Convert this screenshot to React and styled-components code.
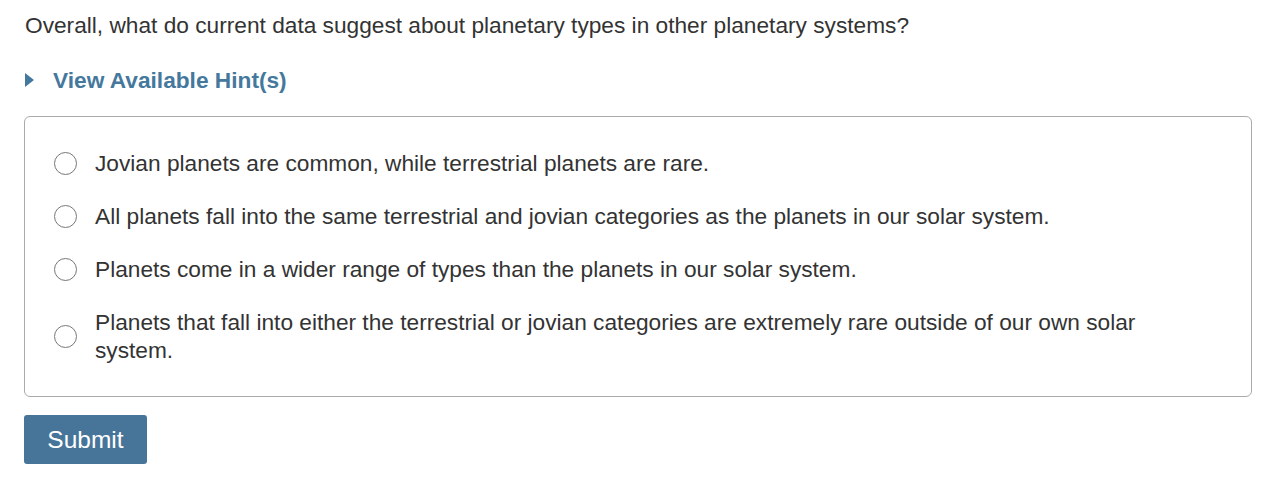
import React from 'react';
import styled, { createGlobalStyle } from 'styled-components';

const Global = createGlobalStyle`
  body {
    margin: 0;
    background: #ffffff;
    font-family: 'Liberation Sans', Arial, Helvetica, sans-serif;
    color: #333333;
  }
`;

const Page = styled.div`
  padding: 11px 24px 24px 24px;
  width: 1228px;
`;

const Question = styled.p`
  margin: 0;
  font-size: 22.7px;
  line-height: 28px;
  padding-left: 1px;
`;

const Hint = styled.div`
  display: flex;
  align-items: center;
  gap: 19px;
  margin-top: 27px;
  padding-left: 1px;
  color: #45789d;
  font-size: 22.7px;
  font-weight: bold;
  line-height: 28px;
`;

const Triangle = styled.span`
  width: 0;
  height: 0;
  border-top: 7.5px solid transparent;
  border-bottom: 7.5px solid transparent;
  border-left: 9px solid #45789d;
`;

const Choices = styled.div`
  margin-top: 22px;
  border: 1px solid #aaaaaa;
  border-radius: 6px;
  padding: 32px 60px 32px 29px;
  display: flex;
  flex-direction: column;
  gap: 25px;
`;

const Choice = styled.label`
  display: flex;
  align-items: center;
  gap: 18px;
  font-size: 22.7px;
  line-height: 28px;
`;

const Radio = styled.span`
  flex: none;
  width: 23px;
  height: 23px;
  border: 1.5px solid #777777;
  border-radius: 50%;
  box-sizing: border-box;
`;

const SubmitButton = styled.button`
  margin-top: 18px;
  width: 123px;
  height: 49px;
  padding: 0;
  border: none;
  border-radius: 3px;
  background: #47759a;
  color: #ffffff;
  font-family: 'Liberation Sans', Arial, Helvetica, sans-serif;
  font-size: 24.5px;
`;

const options = [
  'Jovian planets are common, while terrestrial planets are rare.',
  'All planets fall into the same terrestrial and jovian categories as the planets in our solar system.',
  'Planets come in a wider range of types than the planets in our solar system.',
  'Planets that fall into either the terrestrial or jovian categories are extremely rare outside of our own solar system.',
];

export default function App() {
  return (
    <Page>
      <Global />
      <Question>
        Overall, what do current data suggest about planetary types in other planetary systems?
      </Question>
      <Hint>
        <Triangle />
        View Available Hint(s)
      </Hint>
      <Choices>
        {options.map((text) => (
          <Choice key={text}>
            <Radio />
            <span>{text}</span>
          </Choice>
        ))}
      </Choices>
      <SubmitButton type="button">Submit</SubmitButton>
    </Page>
  );
}
